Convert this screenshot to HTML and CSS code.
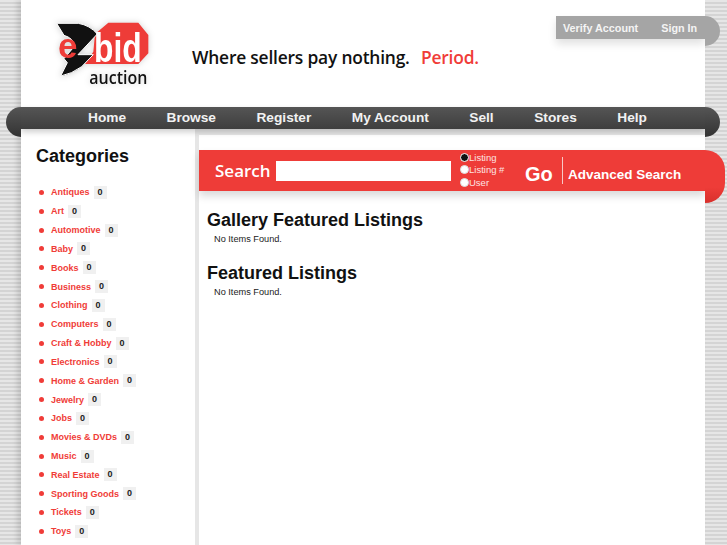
FILE: index.html
```html
<!DOCTYPE html>
<html lang="en">

<head>
    <meta charset="UTF-8">
    <title>eZbid Auction</title>
    <link rel="stylesheet" href="styles.css">
</head>

<body>
    <div class="page">
        <div class="header">
            <svg class="logo" width="120" height="85" viewBox="0 0 360 255">
                <path d="M165 72 L205 38 L295 38 L325 75 L325 130 L295 162 L135 162 L160 125 Z" fill="#ee3c38" />
                <path d="M50 40 L115 40 Q150 46 172 72 L114 134 L160 134 L125 170 Q95 192 62 198 L82 158 L72 146 L104 108 Q100 84 72 76 Z" fill="#111" stroke="#fff" stroke-width="3" />
                <text class="logo-e" x="54" y="145">e</text>
                <text class="logo-bid" x="162" y="155" textLength="143" lengthAdjust="spacingAndGlyphs">bid</text>
                <text class="logo-auction" x="148" y="222" textLength="174" lengthAdjust="spacingAndGlyphs">auction</text>
            </svg>
            <div class="tagline">Where sellers pay nothing. <span class="period">Period.</span></div>
            <div class="user-links">
                <a href="#">Verify Account</a>
                <a href="#">Sign In</a>
            </div>
        </div>

        <div class="nav">
            <a href="#">Home</a>
            <a href="#">Browse</a>
            <a href="#">Register</a>
            <a href="#">My Account</a>
            <a href="#">Sell</a>
            <a href="#">Stores</a>
            <a href="#">Help</a>
        </div>

        <div class="columns">
            <div class="sidebar">
                <h2>Categories</h2>
                <ul class="categories">
                    <li><a href="#">Antiques</a><span class="count">0</span></li>
                    <li><a href="#">Art</a><span class="count">0</span></li>
                    <li><a href="#">Automotive</a><span class="count">0</span></li>
                    <li><a href="#">Baby</a><span class="count">0</span></li>
                    <li><a href="#">Books</a><span class="count">0</span></li>
                    <li><a href="#">Business</a><span class="count">0</span></li>
                    <li><a href="#">Clothing</a><span class="count">0</span></li>
                    <li><a href="#">Computers</a><span class="count">0</span></li>
                    <li><a href="#">Craft &amp; Hobby</a><span class="count">0</span></li>
                    <li><a href="#">Electronics</a><span class="count">0</span></li>
                    <li><a href="#">Home &amp; Garden</a><span class="count">0</span></li>
                    <li><a href="#">Jewelry</a><span class="count">0</span></li>
                    <li><a href="#">Jobs</a><span class="count">0</span></li>
                    <li><a href="#">Movies &amp; DVDs</a><span class="count">0</span></li>
                    <li><a href="#">Music</a><span class="count">0</span></li>
                    <li><a href="#">Real Estate</a><span class="count">0</span></li>
                    <li><a href="#">Sporting Goods</a><span class="count">0</span></li>
                    <li><a href="#">Tickets</a><span class="count">0</span></li>
                    <li><a href="#">Toys</a><span class="count">0</span></li>
                </ul>
            </div>

            <div class="main">
                <form class="search">
                    <span class="search-label">Search</span>
                    <input type="text" class="search-input">
                    <div class="search-types">
                        <label><input type="radio" name="type" checked>Listing</label>
                        <label><input type="radio" name="type">Listing #</label>
                        <label><input type="radio" name="type">User</label>
                    </div>
                    <span class="go">Go</span>
                    <a class="advanced" href="#">Advanced Search</a>
                </form>

                <div class="listings">
                    <h3>Gallery Featured Listings</h3>
                    <p>No Items Found.</p>
                    <h3>Featured Listings</h3>
                    <p>No Items Found.</p>
                </div>
            </div>
        </div>
    </div>
</body>

</html>
```

FILE: styles.css
```css
html {
    overflow: hidden;
}

body {
    margin: 0;
    height: 545px;
    overflow: hidden;
    font-family: 'Liberation Sans', Arial, sans-serif;
    background-color: #dcdcdc;
    background-image: repeating-linear-gradient(to bottom, #e6e6e6 0, #e6e6e6 2px, #d4d4d4 2px, #d4d4d4 4px);
}

a {
    text-decoration: none;
}

.page {
    width: 684px;
    margin-left: 21px;
    background-color: #fff;
    box-shadow: -4px 0 5px rgba(0, 0, 0, 0.12);
}

/* header */
.header {
    position: relative;
    display: flex;
    align-items: flex-start;
    height: 107px;
}

.logo {
    margin: 10px 0 0 19px;
    flex: none;
    filter: drop-shadow(0 0 3px rgba(0, 0, 0, 0.18));
}

.logo-e {
    font: bold 105px 'Liberation Sans', sans-serif;
    fill: #ee3c38;
}

.logo-bid {
    font: bold 120px 'Liberation Sans', sans-serif;
    fill: #fff;
}

.logo-auction {
    font: 600 52px 'Open Sans', sans-serif;
    fill: #111;
}

.tagline {
    margin: 45px 0 0 32px;
    font: 600 17.4px 'Open Sans', sans-serif;
    letter-spacing: -0.2px;
    color: #111;
    white-space: pre;
}

.period {
    margin-left: 7px;
    color: #f03c38;
}

.user-links {
    position: absolute;
    top: 16px;
    left: 535px;
    width: 149px;
    height: 23px;
    display: flex;
    align-items: center;
    gap: 23px;
    padding-left: 7px;
    box-sizing: border-box;
    background-color: #a5a5a5;
    box-shadow: 0 5px 8px rgba(0, 0, 0, 0.12);
}

.user-links::after {
    content: "";
    position: absolute;
    top: 0;
    left: 149px;
    width: 15px;
    height: 30px;
    background-color: #a5a5a5;
    border-radius: 0 15px 15px 0;
}

.user-links a {
    font-size: 10.8px;
    font-weight: bold;
    color: #f4f4f4;
}

/* nav */
.nav {
    position: relative;
    height: 22px;
    display: flex;
    align-items: center;
    background-image: linear-gradient(to bottom, #555, #3e3e3e);
    box-shadow: 0 3px 6px rgba(0, 0, 0, 0.2);
    padding: 0 0 1px 67px;
    box-sizing: border-box;
    z-index: 2;
}

.nav::before,
.nav::after {
    content: "";
    position: absolute;
    top: 0;
    width: 15px;
    height: 30px;
    background-image: linear-gradient(to bottom, #555, #333);
    z-index: -1;
}

.nav::before {
    left: -15px;
    border-radius: 15px 0 0 15px;
}

.nav::after {
    right: -15px;
    border-radius: 0 15px 15px 0;
}

.nav a {
    font-size: 13.7px;
    font-weight: bold;
    color: #f2f2f2;
    margin-right: 40.5px;
    white-space: nowrap;
}

/* columns */
.columns {
    display: flex;
    background-color: #e6e6e6;
}

.sidebar {
    width: 174px;
    flex: none;
    background-color: #fff;
    padding: 16px 0 0 15px;
    box-sizing: border-box;
    height: 416px;
}

.sidebar h2 {
    margin: 0 0 16px;
    font-size: 18px;
    line-height: 22px;
    color: #111;
}

.categories {
    margin: 0;
    padding: 0;
    list-style: none;
}

.categories li {
    position: relative;
    height: 18.83px;
    display: flex;
    align-items: center;
    padding-left: 15px;
}

.categories li::before {
    content: "";
    position: absolute;
    left: 2.5px;
    top: 7px;
    width: 5px;
    height: 5px;
    border-radius: 50%;
    background-color: #f03c38;
}

.categories a {
    font-size: 9px;
    font-weight: bold;
    color: #f03c38;
}

.count {
    margin-left: 4px;
    width: 13px;
    height: 13px;
    line-height: 13px;
    text-align: center;
    font-size: 9px;
    font-weight: bold;
    color: #222;
    background-color: #f0f0f0;
}

/* main column */
.main {
    flex: 1;
    margin-left: 4px;
    margin-top: 6px;
    background-color: #fff;
    height: 410px;
}

.search {
    position: relative;
    margin-top: 15px;
    height: 41px;
    display: flex;
    align-items: center;
    background-color: #ee3c38;
    box-shadow: 0 5px 8px rgba(0, 0, 0, 0.15);
    color: #fff;
}

.search::after {
    content: "";
    position: absolute;
    top: 0;
    right: -20px;
    width: 20px;
    height: 53px;
    background-image: linear-gradient(to bottom, #ee3c38 70%, #d8302c);
    border-radius: 0 20px 20px 0;
}

.search-label {
    margin-left: 16px;
    font: 600 17px 'Open Sans', sans-serif;
    width: 61px;
}

.search-input {
    width: 175px;
    height: 20px;
    padding: 0;
    border: 0;
    background-color: #fff;
}

.search-types {
    margin: 0 0 2px 9px;
    width: 65px;
    font-size: 9.5px;
    line-height: 13px;
    color: #fde4e3;
}

.search-types label {
    display: flex;
    align-items: center;
    height: 12.5px;
}

.search-types input {
    width: 9px;
    height: 9px;
    margin: 0;
    appearance: none;
    background-color: #fff;
    border-radius: 50%;
    border: 1px solid #ddd;
    box-sizing: border-box;
}

.search-types input:checked {
    background-color: #111;
    border: 1px solid #fff;
}

.go {
    margin-top: 8px;
    font-size: 20px;
    font-weight: bold;
    width: 37px;
}

.advanced {
    height: 27px;
    line-height: 35px;
    padding-left: 5px;
    border-left: 1px solid #f8c8c6;
    font-size: 13.5px;
    font-weight: bold;
    color: #fff;
}

.listings {
    padding: 17px 0 0 8px;
}

.listings h3 {
    margin: 0;
    font-size: 18px;
    line-height: 24px;
    font-weight: bold;
    color: #111;
}

.listings p {
    margin: 0 0 15px 7px;
    font-size: 9.2px;
    line-height: 14px;
    color: #222;
}
```
